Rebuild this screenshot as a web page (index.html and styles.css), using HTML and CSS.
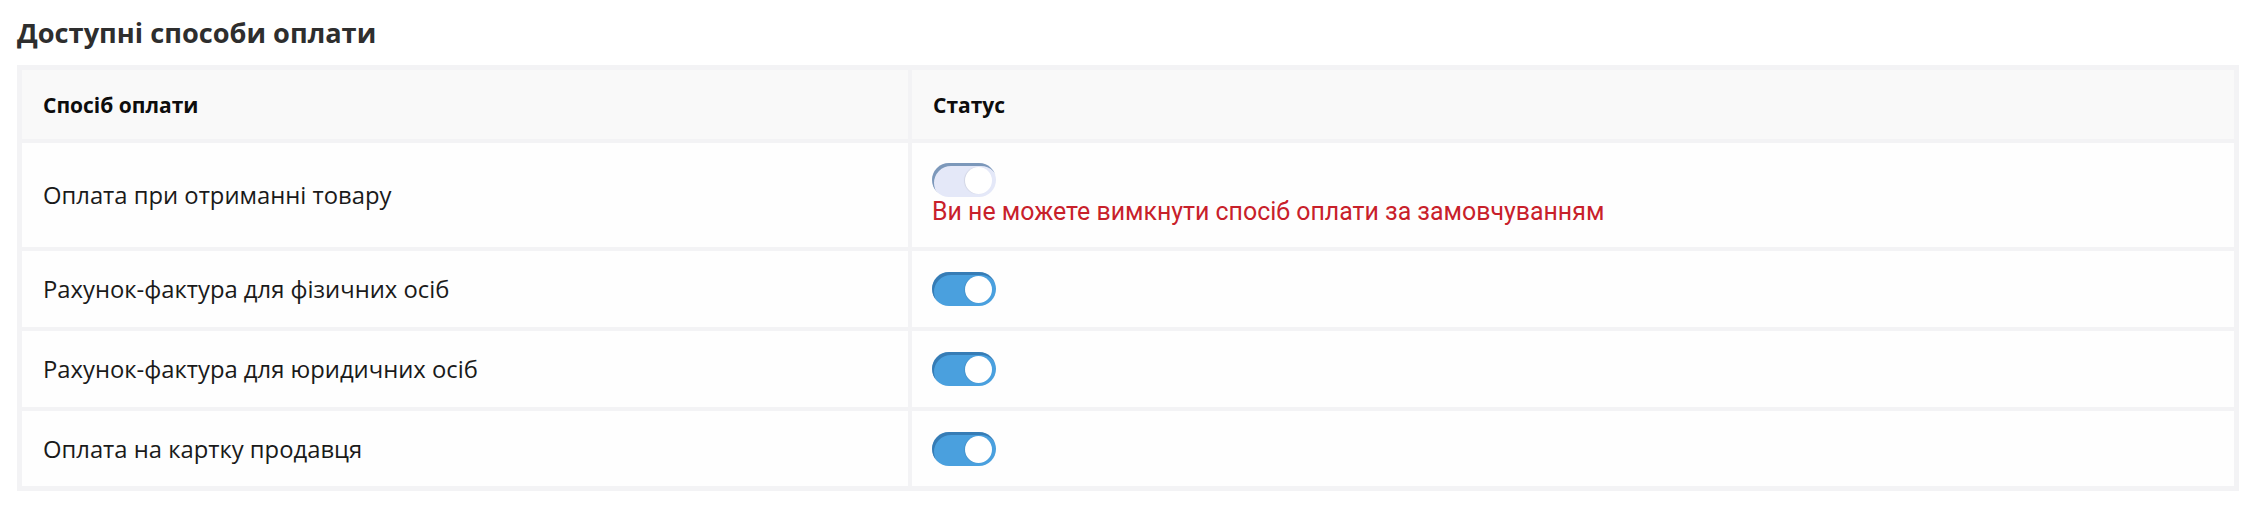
FILE: index.html
```html
<!DOCTYPE html>
<html lang="uk">
<head>
<meta charset="utf-8">
<title>Доступні способи оплати</title>
<link rel="stylesheet" href="styles.css">
</head>
<body>
<h2 class="title">Доступні способи оплати</h2>
<div class="table">
  <div class="cell head">Спосіб оплати</div>
  <div class="cell head">Статус</div>

  <div class="cell name">Оплата при отриманні товару</div>
  <div class="cell status stack">
    <span class="toggle disabled"><span class="knob"></span></span>
    <span class="error">Ви не можете вимкнути спосіб оплати за замовчуванням</span>
  </div>

  <div class="cell name">Рахунок-фактура для фізичних осіб</div>
  <div class="cell status"><span class="toggle"><span class="knob"></span></span></div>

  <div class="cell name">Рахунок-фактура для юридичних осіб</div>
  <div class="cell status"><span class="toggle"><span class="knob"></span></span></div>

  <div class="cell name">Оплата на картку продавця</div>
  <div class="cell status"><span class="toggle"><span class="knob"></span></span></div>
</div>
</body>
</html>
```
FILE: styles.css
```css
html, body {
  margin: 0;
  padding: 0;
  background: #ffffff;
}
body {
  font-family: "Open Sans", "Liberation Sans", sans-serif;
  color: #1a1a1a;
}
.title {
  margin: 17px 0 0 17px;
  height: 48px;
  font-size: 27.2px;
  line-height: 32px;
  font-weight: 700;
  color: #2e2e2e;
}
.table {
  margin: 0 27px 0 17px;
  padding: 5px;
  background: #f3f3f5;
  display: grid;
  grid-template-columns: 886px 1fr;
  grid-template-rows: 69px 104px 76px 76px 75px;
  gap: 4px;
}
.cell {
  background: #fefefe;
  padding: 0 20px 0 21px;
  display: flex;
  align-items: center;
  font-size: 23.8px;
  line-height: 30px;
}
.cell.status {
  padding-left: 20px;
}
.cell.head {
  background: #f9f9f9;
  font-size: 21px;
  font-weight: 700;
  color: #0d0d0d;
}
.stack {
  flex-direction: column;
  justify-content: center;
  align-items: flex-start;
}
.toggle {
  position: relative;
  display: block;
  width: 64px;
  height: 34px;
  border-radius: 17px;
  background: #4aa0de;
  box-shadow: inset 2px 3px 0 rgba(30, 80, 130, 0.45);
  flex: none;
}
.toggle .knob {
  position: absolute;
  right: 4px;
  top: 4px;
  width: 27px;
  height: 27px;
  border-radius: 50%;
  background: #ffffff;
  box-shadow: -1px 0 1px rgba(0, 0, 0, 0.08);
}
.toggle.disabled {
  background: #e4e8f8;
  box-shadow: inset 2px 3px 0 rgba(90, 125, 165, 0.75);
}
.error {
  font-family: Roboto, "Liberation Sans", sans-serif;
  font-size: 24.9px;
  line-height: 30px;
  color: #c8202a;
}
```
